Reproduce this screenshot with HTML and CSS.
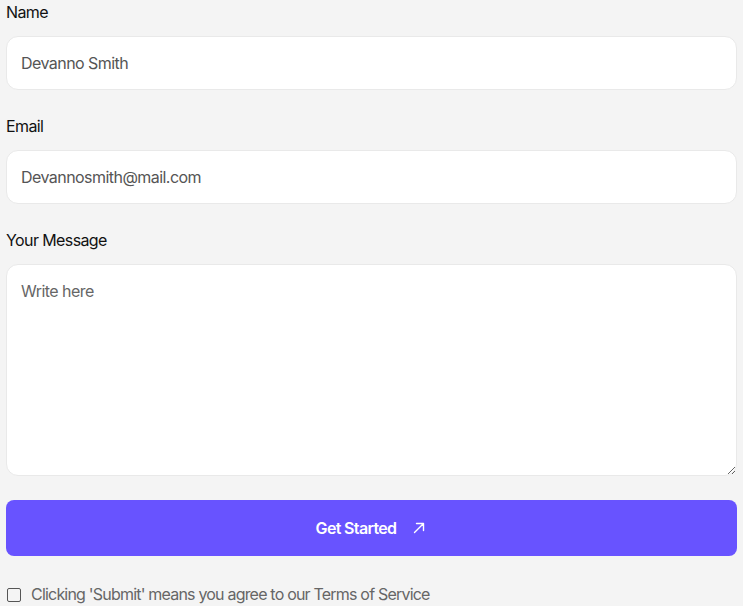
FILE: index.html
```html
<!DOCTYPE html>
<html>
<head>
<meta charset="utf-8">
<link rel="stylesheet" href="styles.css">
</head>
<body>
<form class="form">
  <div class="field">
    <label class="label">Name</label>
    <input class="input" type="text" value="Devanno Smith">
  </div>
  <div class="field">
    <label class="label">Email</label>
    <input class="input" type="text" value="Devannosmith@mail.com">
  </div>
  <div class="field">
    <label class="label">Your Message</label>
    <textarea class="textarea" placeholder="Write here"></textarea>
  </div>
  <button type="button" class="btn">
    <span>Get Started</span>
    <svg class="arrow" width="12" height="12" viewBox="0 0 12 12" fill="none" stroke="#fff" stroke-width="1.4" stroke-linecap="round" stroke-linejoin="round"><path d="M1.5 10.5L10.5 1.5M3.5 1.5H10.5V8.5"/></svg>
  </button>
  <div class="agree">
    <span class="box"></span>
    <span class="agree-text">Clicking 'Submit' means you agree to our Terms of Service</span>
  </div>
</form>
</body>
</html>
```
FILE: styles.css
```css
* { box-sizing: border-box; }
html, body { margin: 0; padding: 0; background: #f4f4f4; }
body { font-family: Inter, "Noto Sans", sans-serif; }
.form { display: flex; flex-direction: column; gap: 24px; padding: 0 6px; }
.field { display: flex; flex-direction: column; gap: 12px; }
.label { font-size: 16px; line-height: 24px; color: #111; letter-spacing: -0.6px; }
.input, .textarea {
  width: 100%;
  background: #fff;
  border: 1px solid #e9e9e9;
  border-radius: 12px;
  font-family: inherit;
  font-size: 16px;
  color: #555;
  letter-spacing: -0.55px;
  padding: 0 14px;
  outline: none;
}
.input { height: 54px; }
.textarea { height: 212px; padding: 16px 14px; resize: vertical; display: block; margin: 0; }
.textarea::placeholder { color: #666; }
.btn {
  height: 56px;
  border: none;
  border-radius: 8px;
  background: #6853ff;
  color: #fff;
  font-family: inherit;
  font-size: 16px;
  font-weight: 600;
  letter-spacing: -0.65px;
  display: flex;
  align-items: center;
  justify-content: center;
  gap: 17px;
  padding: 0 2px 0 0;
}
.arrow { display: block; }
.agree { display: flex; align-items: center; gap: 10px; margin-top: 2px; padding-left: 1px; }
.box { width: 14px; height: 14px; border: 1.5px solid #555; border-radius: 2px; flex: none; margin-top: 2px; }
.agree-text { font-size: 16px; line-height: 24px; color: #666; letter-spacing: -0.8px; }
```
